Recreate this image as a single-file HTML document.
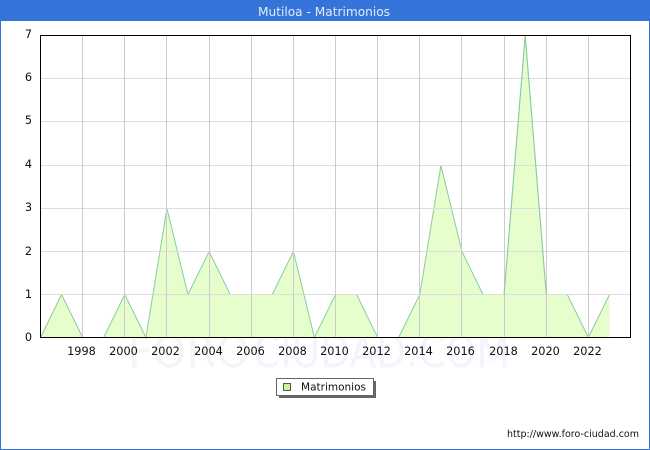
<!DOCTYPE html>
<html><head><meta charset="utf-8"><style>
html,body{margin:0;padding:0;background:#fff}
svg{display:block}
text{font-family:"DejaVu Sans",sans-serif}
</style></head><body>
<svg xmlns="http://www.w3.org/2000/svg" width="650" height="450" viewBox="0 0 650 450">
<rect width="650" height="450" fill="#fff"/>
<rect x="0.5" y="0.5" width="649" height="449" fill="none" stroke="#3574d8"/>
<rect x="0" y="0" width="650" height="21" fill="#3574d8"/>
<text x="324" y="16" font-size="12" fill="#e4ebfa" text-anchor="middle" textLength="132" lengthAdjust="spacingAndGlyphs">Mutiloa - Matrimonios</text>

<text x="128" y="367" font-size="44" fill="#f5f5f5" textLength="122" lengthAdjust="spacingAndGlyphs">FORO</text>
<text x="253" y="367" font-size="44" fill="#f4f4ff" textLength="257" lengthAdjust="spacingAndGlyphs">CIUDAD.COM</text>

<rect x="40" y="35" width="590" height="302" fill="#fff"/>
<polygon fill="#e5fecb" points="40.5,337.5 61.6,294.5 82.6,337.5 103.7,337.5 124.8,294.5 145.9,337.5 166.9,208.5 188,294.5 209.1,251.5 230.2,294.5 251.2,294.5 272.3,294.5 293.4,251.5 314.4,337.5 335.5,294.5 356.6,294.5 377.7,337.5 398.7,337.5 419.8,294.5 440.9,165.5 462,251.5 483,294.5 504.1,294.5 525.2,35.5 546.3,294.5 567.3,294.5 588.4,337.5 609.5,294.5 609.5,337.5"/>
<polyline fill="none" stroke="#8ccba0" stroke-width="1" points="40.5,337.5 61.6,294.5 82.6,337.5 103.7,337.5 124.8,294.5 145.9,337.5 166.9,208.5 188,294.5 209.1,251.5 230.2,294.5 251.2,294.5 272.3,294.5 293.4,251.5 314.4,337.5 335.5,294.5 356.6,294.5 377.7,337.5 398.7,337.5 419.8,294.5 440.9,165.5 462,251.5 483,294.5 504.1,294.5 525.2,35.5 546.3,294.5 567.3,294.5 588.4,337.5 609.5,294.5"/>

<g stroke="#dddddd" stroke-width="1">
<line x1="41" x2="630" y1="78.5" y2="78.5"/>
<line x1="41" x2="630" y1="121.5" y2="121.5"/>
<line x1="41" x2="630" y1="165.5" y2="165.5"/>
<line x1="41" x2="630" y1="208.5" y2="208.5"/>
<line x1="41" x2="630" y1="251.5" y2="251.5"/>
<line x1="41" x2="630" y1="294.5" y2="294.5"/>
</g>
<g stroke="#cccccc" stroke-width="1">
<line x1="82.5" x2="82.5" y1="36" y2="337"/>
<line x1="124.5" x2="124.5" y1="36" y2="337"/>
<line x1="166.5" x2="166.5" y1="36" y2="337"/>
<line x1="209.5" x2="209.5" y1="36" y2="337"/>
<line x1="251.5" x2="251.5" y1="36" y2="337"/>
<line x1="293.5" x2="293.5" y1="36" y2="337"/>
<line x1="335.5" x2="335.5" y1="36" y2="337"/>
<line x1="377.5" x2="377.5" y1="36" y2="337"/>
<line x1="419.5" x2="419.5" y1="36" y2="337"/>
<line x1="461.5" x2="461.5" y1="36" y2="337"/>
<line x1="504.5" x2="504.5" y1="36" y2="337"/>
<line x1="546.5" x2="546.5" y1="36" y2="337"/>
<line x1="588.5" x2="588.5" y1="36" y2="337"/>
</g>
<polyline fill="none" stroke="#8ccba0" stroke-width="1" points="504.1,294.5 525.2,35.5 546.3,294.5"/>
<rect x="40.5" y="35.5" width="590" height="302" fill="none" stroke="#000"/>

<g font-size="11.3" fill="#111" text-anchor="end">
<text x="32" y="38">7</text>
<text x="32" y="81">6</text>
<text x="32" y="124">5</text>
<text x="32" y="168">4</text>
<text x="32" y="211">3</text>
<text x="32" y="255">2</text>
<text x="32" y="298">1</text>
<text x="32" y="341">0</text>
</g>
<g font-size="11.3" fill="#111" text-anchor="middle">
<text x="81.5" y="355">1998</text>
<text x="123.5" y="355">2000</text>
<text x="165.5" y="355">2002</text>
<text x="208.5" y="355">2004</text>
<text x="250.5" y="355">2006</text>
<text x="292.5" y="355">2008</text>
<text x="334.5" y="355">2010</text>
<text x="376.5" y="355">2012</text>
<text x="418.5" y="355">2014</text>
<text x="460.5" y="355">2016</text>
<text x="503.5" y="355">2018</text>
<text x="545.5" y="355">2020</text>
<text x="587.5" y="355">2022</text>
</g>

<rect x="279" y="381" width="97" height="17" fill="#666"/>
<rect x="276.5" y="378.5" width="97" height="17" fill="#fff" stroke="#666"/>
<rect x="283.5" y="383.5" width="7" height="7" fill="#ccf58f" stroke="#555"/>
<text x="301" y="390.5" font-size="11" fill="#111" textLength="65" lengthAdjust="spacingAndGlyphs">Matrimonios</text>

<text x="639" y="437" font-size="9.5" fill="#111" text-anchor="end" textLength="132" lengthAdjust="spacingAndGlyphs">http://www.foro-ciudad.com</text>
</svg>
</body></html>
